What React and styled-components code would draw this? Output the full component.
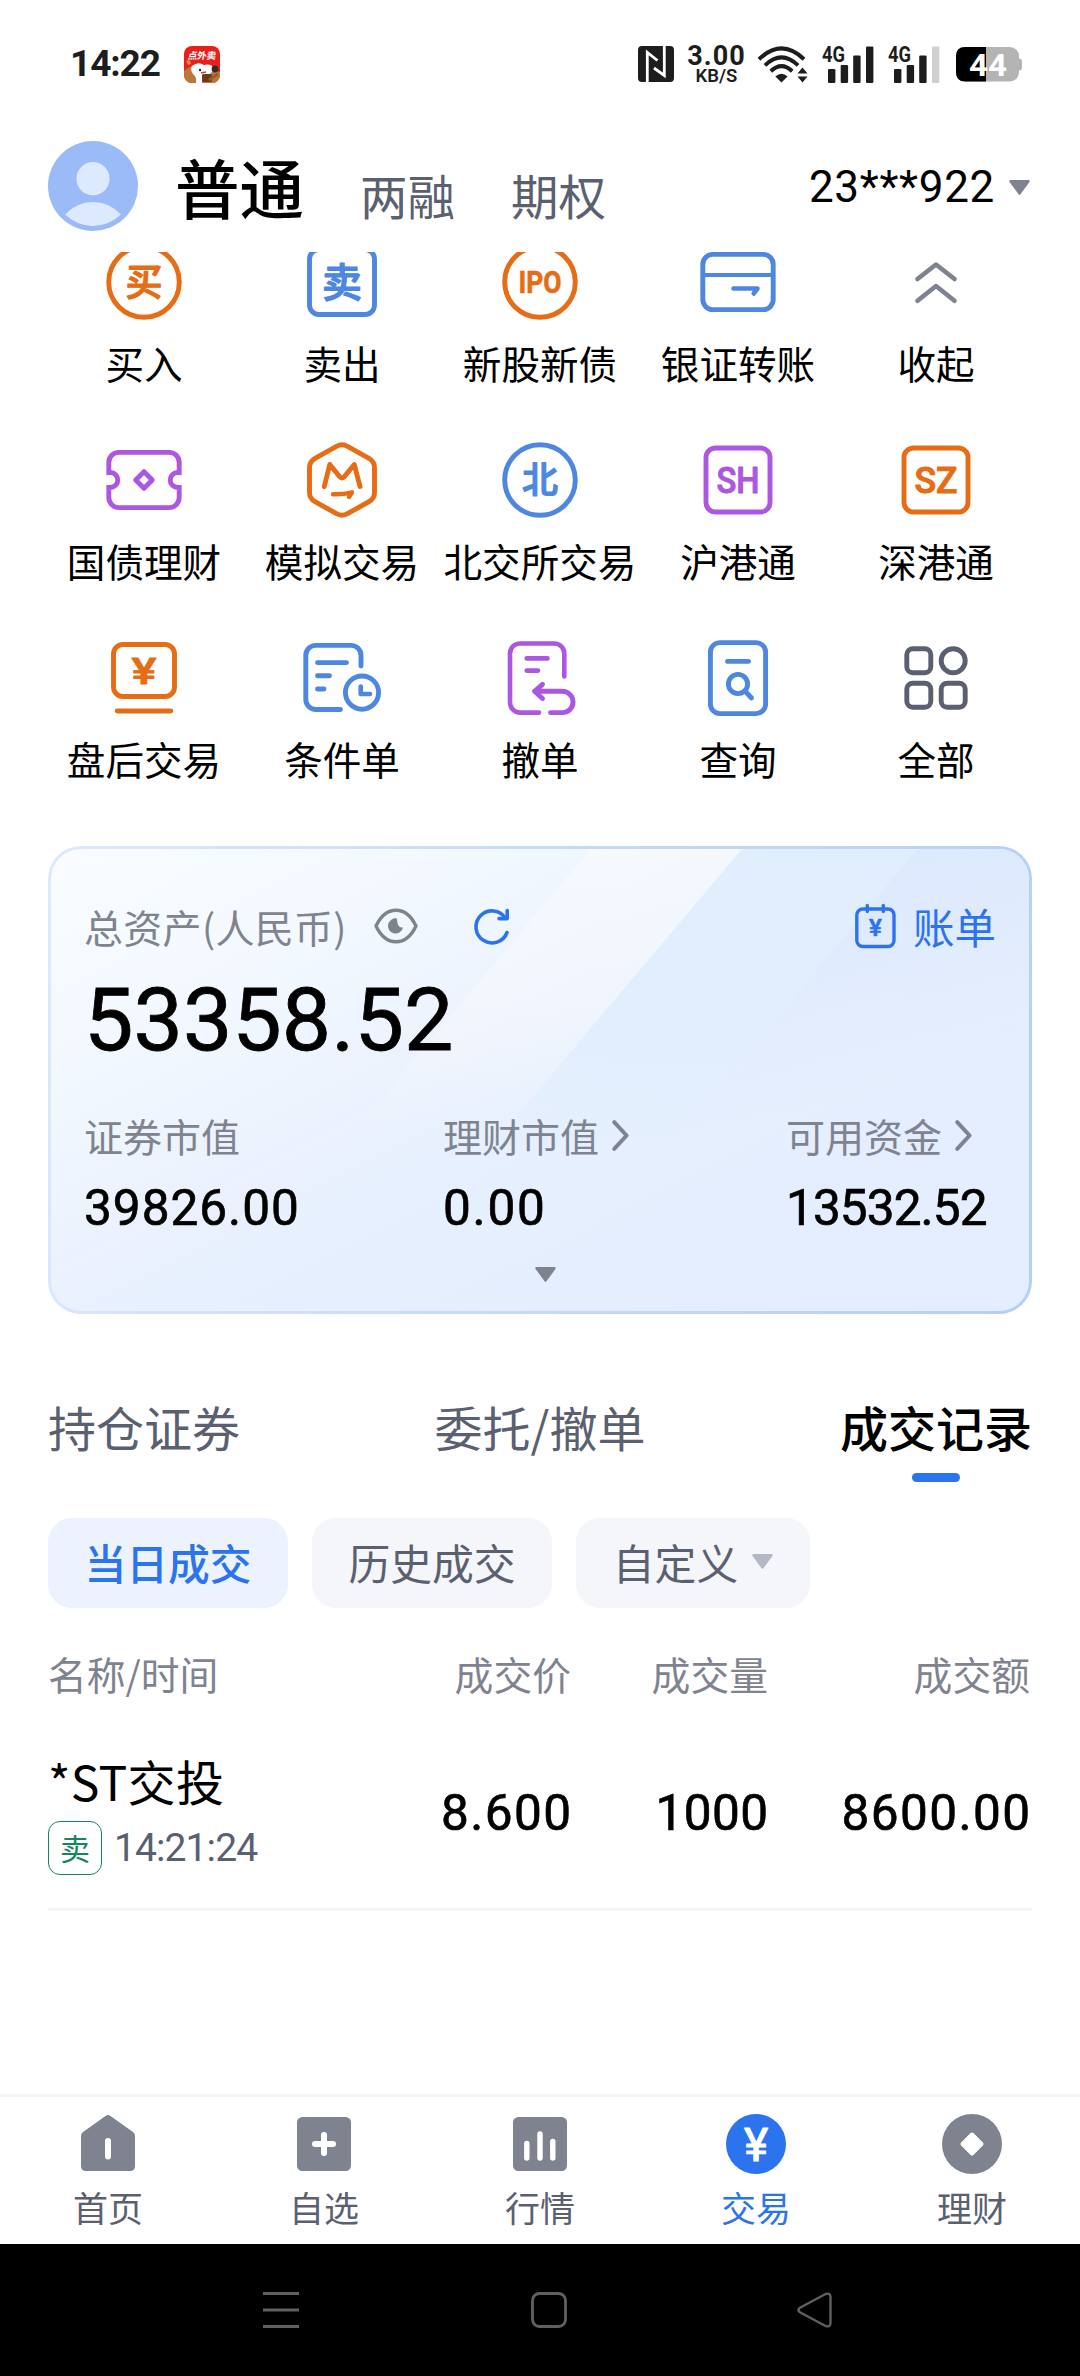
import React from "react";
import styled, { createGlobalStyle } from "styled-components";

const CJK = `"Noto Sans CJK SC", "Noto Sans", sans-serif`;
const NUM = `Roboto, "Noto Sans CJK SC", sans-serif`;

const C = {
  orange: "#e66c15",
  blue: "#4d87df",
  purple: "#ac57e2",
  slate: "#5b6071",
  gray: "#7f838f",
  brand: "#2c74ed",
  green: "#158560",
};

const Global = createGlobalStyle`
  * { box-sizing: border-box; }
  body { margin: 0; background: #fff; }
  svg { display: block; flex: none; overflow: visible; }
`;

const Screen = styled.div`
  width: 1080px;
  height: 2376px;
  display: flex;
  flex-direction: column;
  overflow: hidden;
  background: #fff;
  color: #000;
  font-family: ${CJK};
  white-space: nowrap;
`;

/* ---------- status bar ---------- */
const StatusBar = styled.div`
  height: 128px;
  flex: none;
  display: flex;
  align-items: center;
  padding: 0 58px 0 70px;
  color: #1d1d1d;
`;
const Clock = styled.div`
  font: 700 37px/40px ${NUM};
  letter-spacing: -1.1px;
  width: 114px;
`;
const StatusIcons = styled.div`
  margin-left: auto;
  display: flex;
  align-items: center;
`;
const Speed = styled.div`
  width: 57px;
  margin: 0 12px 0 14px;
  display: flex;
  flex-direction: column;
  align-items: center;
  font-family: ${NUM};
  font-weight: 700;
`;
const SpeedValue = styled.div`
  font-size: 27px;
  line-height: 20px;
  letter-spacing: 1.1px;
`;
const SpeedUnit = styled.div`
  font-size: 18.5px;
  line-height: 14px;
  margin-top: 3px;
  font-weight: 600;
`;
const Gap = styled.span`
  width: ${(p) => p.$w}px;
`;

/* ---------- header ---------- */
const Header = styled.header`
  height: 116px;
  margin-bottom: 8px;
  flex: none;
  display: flex;
  align-items: center;
  padding: 0 50px 0 48px;
`;
const Mode = styled.div`
  font-size: ${(p) => (p.$active ? 64.5 : 47.5)}px;
  font-weight: ${(p) => (p.$active ? 500 : 400)};
  color: ${(p) => (p.$active ? "#000" : C.slate)};
  line-height: 80px;
  margin-left: ${(p) => (p.$active ? 37 : 56)}px;
  padding-top: ${(p) => (p.$active ? 0 : 17)}px;
`;
const Account = styled.div`
  margin-left: auto;
  display: flex;
  align-items: center;
  gap: 14px;
  padding-top: 2px;
  font: 400 44px/50px ${NUM};
  letter-spacing: 0.7px;
`;

/* ---------- shortcut grid ---------- */
const Main = styled.main`
  flex: 1;
  min-height: 0;
  overflow: hidden;
  display: flex;
  flex-direction: column;
`;
const Shortcuts = styled.div`
  margin-top: -10px;
  padding: 0 45px;
  display: grid;
  grid-template-columns: repeat(5, 198px);
  grid-auto-rows: 198px;
  flex: none;
`;
const Shortcut = styled.div`
  display: flex;
  flex-direction: column;
  align-items: center;
`;
const ShortcutLabel = styled.div`
  margin-top: 12px;
  font-size: 38.6px;
  line-height: 56px;
`;

/* ---------- asset card ---------- */
const Card = styled.section`
  position: relative;
  flex: none;
  height: 468px;
  margin: 10px 48px 0;
  padding: 0 33px;
  border: 3px solid transparent;
  border-radius: 33px;
  overflow: hidden;
  display: flex;
  flex-direction: column;
  background:
    linear-gradient(153deg, #f9fdff 0%, #f2f8ff 25%, #ecf2fd 43%, #e6f0fe 55%, #e4eefe 75%, #e5eeff 100%) padding-box,
    linear-gradient(100deg, #dde9fb 0%, #c6daf6 50%, #b5cff5 100%) border-box;
`;
const Beam = styled.div`
  position: absolute;
  inset: 0;
  clip-path: polygon(${(p) => p.$shape});
  background: linear-gradient(${(p) => p.$fill});
`;
const CardTop = styled.div`
  position: relative;
  display: flex;
  align-items: center;
  height: 50px;
  margin-top: 52px;
`;
const Muted = styled.div`
  font-size: 39px;
  line-height: 50px;
  color: ${C.gray};
  display: flex;
  align-items: center;
`;
const AssetTitle = styled(Muted)`
  letter-spacing: 0.3px;
`;
const Bill = styled.div`
  margin-left: auto;
  display: flex;
  align-items: center;
  gap: 17px;
  font-size: 41.5px;
  line-height: 50px;
  color: ${C.brand};
`;
const Total = styled.div`
  position: relative;
  margin-top: 29px;
  font: 400 88px/80px ${NUM};
  -webkit-text-stroke: 0.8px #000;
`;
const Figures = styled.div`
  position: relative;
  margin-top: 50px;
  display: grid;
  grid-template-columns: 359px 343px 1fr;
`;
const Amount = styled.div`
  font: 400 49.5px/60px ${NUM};
  -webkit-text-stroke: 0.7px #000;
  letter-spacing: ${(p) => p.$track || 0}px;
`;
const FigureAmount = styled(Amount)`
  margin-top: 18px;
`;
const Expand = styled.div`
  position: relative;
  margin: 29px 0 0 451px;
`;

/* ---------- tabs, chips, table ---------- */
const Tabs = styled.nav`
  margin: 82px 48px 0;
  display: flex;
  justify-content: space-between;
  flex: none;
`;
const Tab = styled.div`
  display: flex;
  flex-direction: column;
  align-items: center;
  font-size: 48px;
  line-height: 60px;
  font-weight: ${(p) => (p.$active ? 500 : 400)};
  color: ${(p) => (p.$active ? "#000" : C.slate)};
  &::after {
    content: "";
    width: 48px;
    height: 9px;
    margin-top: 17px;
    border-radius: 5px;
    background: ${(p) => (p.$active ? C.brand : "transparent")};
  }
`;
const Chips = styled.div`
  margin: 36px 48px 0;
  display: flex;
  gap: 24px;
  flex: none;
`;
const Chip = styled.div`
  height: 90px;
  width: ${(p) => p.$w}px;
  border-radius: 24px;
  display: flex;
  align-items: center;
  justify-content: center;
  gap: 14px;
  font-size: 41.8px;
  line-height: 60px;
  padding-bottom: 3px;
  font-weight: ${(p) => (p.$active ? 500 : 400)};
  color: ${(p) => (p.$active ? C.brand : C.slate)};
  background: ${(p) => (p.$active ? "#ecf3fe" : "#f5f6fa")};
`;
const TableRow = styled.div`
  margin: 0 48px;
  display: grid;
  grid-template-columns: 300px 223px 197px 262px;
  align-items: center;
  flex: none;
`;
const HeadRow = styled(TableRow)`
  margin-top: 40px;
  font-size: 38.8px;
  line-height: 50px;
  color: ${C.gray};
`;
const DealRow = styled(TableRow)`
  padding: 52px 0 33px;
  border-bottom: 3px solid #f4f5fa;
`;
const Cell = styled.div`
  text-align: ${(p) => (p.$left ? "left" : "right")};
`;
const AmountCell = styled(Amount)`
  text-align: right;
  margin-right: ${(p) => -p.$track}px;
`;
const DealName = styled.div`
  font-size: 48px;
  line-height: 60px;
  letter-spacing: 0.3px;
`;
const DealMeta = styled.div`
  margin-top: 11px;
  display: flex;
  align-items: center;
  gap: 12px;
  font: 400 39px/54px ${NUM};
  letter-spacing: -0.9px;
  color: ${C.slate};
`;
const SideTag = styled.span`
  width: 54px;
  height: 54px;
  border: 1.5px solid ${C.green};
  border-radius: 12px;
  display: flex;
  align-items: center;
  justify-content: center;
  font: 400 30px/48px ${CJK};
  letter-spacing: 0;
  padding-bottom: 2px;
  color: ${C.green};
`;

/* ---------- bottom bars ---------- */
const TabBar = styled.nav`
  height: 150px;
  flex: none;
  border-top: 3px solid #f4f5fa;
  display: grid;
  grid-template-columns: repeat(5, 1fr);
  padding-top: 17px;
`;
const TabItem = styled.div`
  display: flex;
  flex-direction: column;
  align-items: center;
  font-size: 35px;
  line-height: 50px;
  gap: 8px;
  color: ${(p) => (p.$active ? C.brand : C.slate)};
`;
const SystemNav = styled.div`
  height: 132px;
  flex: none;
  background: #000;
  display: flex;
  align-items: center;
  padding-left: 263px;
`;

/* ---------- icons ---------- */
const Line = ({ color, children, w = 4.9 }) => (
  <svg width="80" height="80" viewBox="0 0 80 80" fill="none" stroke={color} strokeWidth={w} strokeLinecap="round" strokeLinejoin="round">
    {children}
  </svg>
);
const Word = ({ children, x = 40, y, size, color, width, weight = 700, soft = 0.6, family = NUM }) => (
  <text
    x={x}
    y={y}
    fontSize={size}
    fontWeight={weight}
    fontFamily={family}
    textAnchor="middle"
    fill={color}
    stroke={color}
    strokeWidth={soft}
    textLength={width}
    lengthAdjust="spacingAndGlyphs"
  >
    {children}
  </text>
);

const shortcuts = [
  ["买入", (
    <Line color={C.orange}><circle cx="40" cy="40" r="35.3" /><Word family={CJK} y={53.5} size={37} weight={500} soft={1.2} color={C.orange}>买</Word></Line>
  )],
  ["卖出", (
    <Line color={C.blue}><rect x="7.5" y="7.5" width="65" height="65" rx="9.5" /><Word family={CJK} y={54.5} size={40} weight={500} soft={1.2} color={C.blue}>卖</Word></Line>
  )],
  ["新股新债", (
    <Line color={C.orange}><circle cx="40" cy="40" r="35.3" /><Word y={51} size={31} width={43} color={C.orange}>IPO</Word></Line>
  )],
  ["银证转账", (
    <Line color={C.blue}><rect x="4.8" y="12.4" width="70.4" height="55.2" rx="10" /><path d="M5 33H75" strokeWidth="4" /><path d="M35.5 46.5H59.5L55.7 51.5" strokeWidth="4.6" /></Line>
  )],
  ["收起", (
    <Line color={C.gray} w={4.6}><path d="M21.5 37L40 22.5 58.5 37M21.5 58.7L40 44 58.5 58.7" /></Line>
  )],
  ["国债理财", (
    <Line color={C.purple}><path d="M4.8 32.5V22.4a10 10 0 0 1 10-10H65.2a10 10 0 0 1 10 10V32.5h-1.5a7.5 7.5 0 0 0 0 15h1.5V57.6a10 10 0 0 1-10 10H14.8a10 10 0 0 1-10-10V47.5h1.5a7.5 7.5 0 0 0 0-15z" strokeLinejoin="miter" /><path d="M40 31.7L48.3 40 40 48.3 31.7 40z" /></Line>
  )],
  ["模拟交易", (
    <Line color={C.orange}><path d="M45.5 6.3L67 18.3Q72.5 21.5 72.5 27.5V52.5Q72.5 58.5 67 61.7L45.5 73.7Q40 76.7 34.5 73.7L13 61.7Q7.5 58.5 7.5 52.5V27.5Q7.5 21.5 13 18.3L34.5 6.3Q40 3.3 45.5 6.3z" /><path d="M22.3 46.5L27.8 24.5 37.5 36.5Q40 39.5 42.5 36.5L52.3 24.5 58 46.5" /><path d="M31 54.3Q42 54.5 50 52.3L47 57" strokeWidth="4.4" /></Line>
  )],
  ["北交所交易", (
    <Line color={C.blue}><circle cx="40" cy="40" r="35.3" /><Word family={CJK} y={52.5} size={36} weight={500} soft={1.2} color={C.blue}>北</Word></Line>
  )],
  ["沪港通", (
    <Line color={C.purple}><rect x="8" y="8" width="64" height="64" rx="9.5" /><Word y={52.7} size={36} width={43} weight={500} soft={1} color={C.purple}>SH</Word></Line>
  )],
  ["深港通", (
    <Line color={C.orange}><rect x="8" y="8" width="64" height="64" rx="9.5" /><Word y={52.7} size={36} width={43} weight={500} soft={1} color={C.orange}>SZ</Word></Line>
  )],
  ["盘后交易", (
    <Line color={C.orange}><rect x="9.5" y="6.5" width="61" height="52" rx="9.5" /><path d="M13.2 73H66.8" /><Word y={46} size={37} width={25} weight={500} soft={0.8} color={C.orange}>¥</Word></Line>
  )],
  ["条件单", (
    <Line color={C.blue}><path d="M59 28V17.4a10 10 0 0 0-10-10H13.8a10 10 0 0 0-10 10V61.5a10 10 0 0 0 10 10H38.5" /><path d="M15.5 24.6H44.5M15.5 37.7H27.5M15.5 51H22" /><circle cx="60" cy="54.6" r="16.6" /><path d="M58.7 48.5V56H68" strokeWidth="4.6" /></Line>
  )],
  ["撤单", (
    <Line color={C.purple}><path d="M64.3 38.5V15.5a10 10 0 0 0-10-10H20a10 10 0 0 0-10 10V64.6a10 10 0 0 0 10 10H39" strokeWidth="4.6" /><path d="M26.7 20.4H47.5M26.7 32.6H38" strokeWidth="4.6" /><path d="M42.5 46.3L34.5 53.3 42.5 60.5M34.5 53.3H62.4a10.6 10.6 0 0 1 0 21.3H50.5" /></Line>
  )],
  ["查询", (
    <Line color={C.blue}><rect x="12.4" y="4.6" width="55.2" height="71" rx="9.5" /><path d="M29.5 23.4H50.5" /><circle cx="40" cy="46" r="9.6" /><path d="M47 53L53.5 60" /></Line>
  )],
  ["全部", (
    <Line color={C.slate}><rect x="10.8" y="10.8" width="24" height="24" rx="6" /><circle cx="57.2" cy="22.8" r="12" /><rect x="10.8" y="45.2" width="24" height="24" rx="6" /><rect x="45.2" y="45.2" width="24" height="24" rx="6" /></Line>
  )],
];

const Caret = ({ color = C.gray }) => (
  <svg width="21" height="15" viewBox="0 0 21 15">
    <path d="M1.5 1.2H19.5L10.5 13.5z" fill={color} stroke={color} strokeWidth="2.4" strokeLinejoin="round" />
  </svg>
);
const Chevron = () => (
  <svg width="17" height="31" viewBox="0 0 17 31">
    <path d="M2.2 2.2L14.6 15.5 2.2 28.8" fill="none" stroke={C.gray} strokeWidth="4" strokeLinecap="round" strokeLinejoin="round" />
  </svg>
);
const Avatar = () => (
  <svg width="90" height="90" viewBox="0 0 90 90">
    <circle cx="45" cy="45" r="45" fill="#9abaf8" />
    <circle cx="45" cy="37.7" r="16.6" fill="#dce9fe" />
    <path d="M17 73.5A37.6 37.6 0 0 1 73 73.5A40 40 0 0 1 17 73.5z" fill="#dce9fe" />
  </svg>
);
const AppBadge = () => (
  <svg width="36" height="37" viewBox="0 0 36 37">
    <defs>
      <clipPath id="badge"><rect width="36" height="37" rx="8" /></clipPath>
    </defs>
    <g clipPath="url(#badge)">
      <rect width="36" height="37" fill="#e81f1d" />
      <path d="M0 25Q8 17 18 20T36 26V37H0z" fill="#b8793a" />
      <path d="M2 15l4-1 1 4-3 1z" fill="#e08a3c" />
      <path d="M8 20Q14 15 20 19Q27 17 30 22Q28 30 19 29L18 37H12Q13 31 9 28Q6 24 8 20z" fill="#fff" />
      <circle cx="31" cy="23" r="3.4" fill="#3a2a26" />
      <rect x="18" y="28" width="10" height="8" rx="1.5" fill="#6d3a1c" />
      <circle cx="16" cy="24" r="1.2" fill="#222" />
      <path d="M17 27l5-1" stroke="#d33" strokeWidth="1.5" />
      <path d="M25 34l9-6" stroke="#9a5b2c" strokeWidth="3" />
    </g>
    <text x="18" y="13.4" fontSize="9.5" fontWeight="700" fontFamily={CJK} fill="#fff" textAnchor="middle" transform="skewX(-8) translate(1.5 0)">点外卖</text>
  </svg>
);
const Nfc = () => (
  <svg width="36" height="36" viewBox="0 0 36 36">
    <rect width="36" height="36" rx="4" fill="#1d1d1d" />
    <path d="M9.3 36V6.5L19.5 14.5M26.3 0V29.5L16 22" fill="none" stroke="#fff" strokeWidth="2.8" />
  </svg>
);
const Wifi = () => (
  <svg width="52" height="37" viewBox="0 0 52 37" fill="none" stroke="#1d1d1d" strokeWidth="4">
    <path d="M2 13.2Q24.5-8.5 47 13.2" />
    <path d="M8 19.4Q24.5 3.5 41 19.4" />
    <path d="M13.8 25.2Q24.5 15 35.2 25.2" />
    <path d="M18.4 30.5Q24.5 25 30.6 30.5L24.5 36.5z" fill="#1d1d1d" stroke="none" />
    <path d="M45.5 21.5L50.5 27.5H40.5zM45.5 36.5L50.5 30.5H40.5z" fill="#1d1d1d" stroke="none" />
  </svg>
);
const Signal = ({ level }) => (
  <svg width="52" height="37" viewBox="0 0 52 37">
    <text x="0" y="15.8" fontSize="21.5" fontWeight="700" fontFamily={NUM} fill="#1d1d1d" textLength="23" lengthAdjust="spacingAndGlyphs">4G</text>
    {[[6, 23], [18.7, 19], [31.2, 9.5], [44, 0.5]].map(([x, y], i) => (
      <rect key={x} x={x} y={y} width="7.4" height={37 - y} rx="1.2" fill={i < level ? "#1d1d1d" : "#d0d0d0"} />
    ))}
  </svg>
);
const Battery = () => (
  <svg width="66" height="35" viewBox="0 0 66 35">
    <rect x="58" y="11.5" width="8" height="12" rx="3" fill="#b4b4b4" />
    <rect width="63" height="34.5" rx="9" fill="#b4b4b4" />
    <path d="M30 0H9Q0 0 0 9V25.5Q0 34.5 9 34.5H30z" fill="#000" />
    <text x="32" y="28.6" fontSize="31" fontWeight="700" fontFamily={NUM} fill="#fff" textAnchor="middle" textLength="38" lengthAdjust="spacingAndGlyphs">44</text>
  </svg>
);
const Eye = () => (
  <svg width="44" height="36" viewBox="0 0 44 36">
    <path d="M2 18Q9.5 2.2 22 2.2T42 18Q34.5 33.8 22 33.8T2 18z" fill="none" stroke={C.gray} strokeWidth="3.4" strokeLinejoin="round" />
    <path d="M23 10.5A7.6 7.6 0 1 0 29 19.5Q23 20.5 23 10.5z" fill={C.gray} />
  </svg>
);
const Refresh = () => (
  <svg width="36" height="36" viewBox="0 0 36 36" fill="none" stroke={C.brand} strokeWidth="3.6" strokeLinecap="round" strokeLinejoin="round">
    <path d="M33 24.5A16 16 0 1 1 31.5 10.3" />
    <path d="M33.2 2.5V10.6H25" />
  </svg>
);
const BillIcon = () => (
  <svg width="41" height="46" viewBox="0 0 41 46" fill="none" stroke={C.brand} strokeWidth="3.4" strokeLinecap="round">
    <rect x="1.8" y="6" width="37.2" height="37.5" rx="6" />
    <path d="M12.3 2.5V8.5M28.3 2.5V8.5" />
    <text x="20.4" y="32.5" fontSize="24" fontWeight="500" fontFamily={NUM} fill={C.brand} strokeWidth="0.7" textAnchor="middle">¥</text>
  </svg>
);

const TabIcon = ({ children }) => (
  <svg width="60" height="60" viewBox="0 0 60 60">{children}</svg>
);
const bars = [
  ["首页", <TabIcon><path d="M27.5 2Q30 0 32.5 2L55 18Q57 19.5 57 22V52Q57 57 52 57H8Q3 57 3 52V22Q3 19.5 5 18z" fill={C.gray} /><path d="M30 27V42.5" stroke="#fff" strokeWidth="6" strokeLinecap="round" /></TabIcon>],
  ["自选", <TabIcon><rect x="3" y="3" width="54" height="54" rx="5.5" fill={C.gray} /><path d="M30 21V39M21 30H39" stroke="#fff" strokeWidth="6" strokeLinecap="round" /></TabIcon>],
  ["行情", <TabIcon><rect x="3" y="3" width="54" height="54" rx="5.5" fill={C.gray} /><path d="M16.8 29.5V44M30 20V44M42.8 27.5V44" stroke="#fff" strokeWidth="5.4" strokeLinecap="round" /></TabIcon>],
  ["交易", <TabIcon><circle cx="30" cy="30" r="30" fill={C.brand} /><text x="30" y="46.5" fontSize="46" fontWeight="400" fontFamily={NUM} fill="#fff" stroke="#fff" strokeWidth="1.1" strokeLinejoin="round" textAnchor="middle">¥</text></TabIcon>],
  ["理财", <TabIcon><circle cx="30" cy="30" r="30" fill={C.gray} /><path d="M30 20.5L39.5 30 30 39.5 20.5 30z" fill="#fff" stroke="#fff" strokeWidth="4" strokeLinejoin="round" /></TabIcon>],
];

export default function App() {
  return (
    <Screen>
      <Global />
      <StatusBar>
        <Clock>14:22</Clock>
        <AppBadge />
        <StatusIcons>
          <Nfc />
          <Speed>
            <SpeedValue>3.00</SpeedValue>
            <SpeedUnit>KB/S</SpeedUnit>
          </Speed>
          <Wifi />
          <Gap $w={13} />
          <Signal level={4} />
          <Gap $w={14} />
          <Signal level={3} />
          <Gap $w={16} />
          <Battery />
        </StatusIcons>
      </StatusBar>

      <Header>
        <Avatar />
        <Mode $active>普通</Mode>
        <Mode>两融</Mode>
        <Mode>期权</Mode>
        <Account>
          23***922
          <Caret />
        </Account>
      </Header>

      <Main>
        <Shortcuts>
          {shortcuts.map(([label, icon]) => (
            <Shortcut key={label}>
              {icon}
              <ShortcutLabel>{label}</ShortcutLabel>
            </Shortcut>
          ))}
        </Shortcuts>

        <Card>
          <Beam $shape="540px 0, 691px 0, 420px 321px, 270px 321px" $fill="180deg, rgba(255,255,255,0.4) 0%, rgba(255,255,255,0.25) 35%, rgba(255,255,255,0) 62%" />
          <Beam $shape="691px 0, 866px 0, 600px 320px, 420px 321px" $fill="180deg, #e0eefe 0%, #e1eefe 40%, rgba(228,238,254,0) 66%" />
          <Beam $shape="866px 0, 100% 0, 100% 320px, 600px 320px" $fill="165deg, #d8e7fe 0%, #dae8fe 22%, #dfeafd 42%, rgba(228,238,254,0) 64%" />
          <CardTop>
            <AssetTitle>总资产(人民币)</AssetTitle>
            <Gap $w={27} />
            <Eye />
            <Gap $w={56} />
            <Refresh />
            <Bill>
              <BillIcon />
              账单
            </Bill>
          </CardTop>
          <Total>53358.52</Total>
          <Figures>
            <div>
              <Muted>证券市值</Muted>
              <FigureAmount $track={1}>39826.00</FigureAmount>
            </div>
            <div>
              <Muted>理财市值<Gap $w={13} /><Chevron /></Muted>
              <FigureAmount $track={1.8}>0.00</FigureAmount>
            </div>
            <div>
              <Muted>可用资金<Gap $w={13} /><Chevron /></Muted>
              <FigureAmount $track={-0.9}>13532.52</FigureAmount>
            </div>
          </Figures>
          <Expand><Caret /></Expand>
        </Card>

        <Tabs>
          <Tab>持仓证券</Tab>
          <Tab>委托/撤单</Tab>
          <Tab $active>成交记录</Tab>
        </Tabs>

        <Chips>
          <Chip $w={240} $active>当日成交</Chip>
          <Chip $w={240}>历史成交</Chip>
          <Chip $w={234}>自定义<Caret color="#b3b8c5" /></Chip>
        </Chips>

        <HeadRow>
          <Cell $left>名称/时间</Cell>
          <Cell>成交价</Cell>
          <Cell>成交量</Cell>
          <Cell>成交额</Cell>
        </HeadRow>
        <DealRow>
          <div>
            <DealName>*ST交投</DealName>
            <DealMeta><SideTag>卖</SideTag>14:21:24</DealMeta>
          </div>
          <AmountCell $track={1.4}>8.600</AmountCell>
          <AmountCell $track={0.4}>1000</AmountCell>
          <AmountCell $track={1.4}>8600.00</AmountCell>
        </DealRow>
      </Main>

      <TabBar>
        {bars.map(([label, icon]) => (
          <TabItem key={label} $active={label === "交易"}>
            {icon}
            {label}
          </TabItem>
        ))}
      </TabBar>
      <SystemNav>
        <svg width="36" height="36" viewBox="0 0 36 36" stroke="#606060" strokeWidth="3">
          <path d="M0 1.5H36M0 18H36M0 34.5H36" />
        </svg>
        <Gap $w={232} />
        <svg width="36" height="36" viewBox="0 0 36 36" fill="none" stroke="#606060" strokeWidth="2.8">
          <rect x="1.5" y="1.5" width="33" height="33" rx="7" />
        </svg>
        <Gap $w={230} />
        <svg width="35" height="36" viewBox="0 0 35 36" fill="none" stroke="#606060" strokeWidth="2.4">
          <path d="M2.5 16L28.5 2Q33.5 0.5 33.5 5V31Q33.5 35.5 28.5 34L2.5 20Q0.5 18 2.5 16z" />
        </svg>
      </SystemNav>
    </Screen>
  );
}
